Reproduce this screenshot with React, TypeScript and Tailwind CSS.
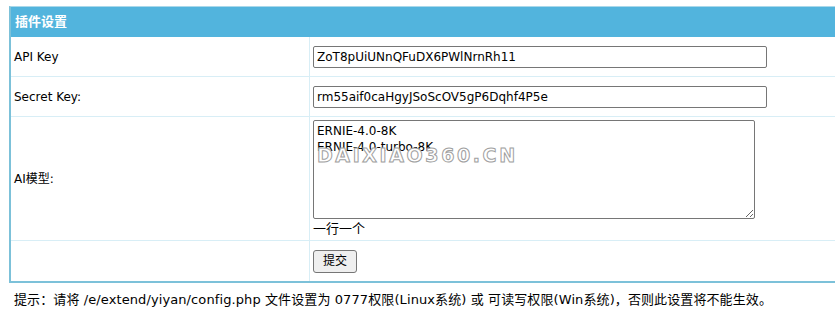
export default function App() {
  return (
    <div className="w-[835px] h-[311px] overflow-hidden bg-white font-['DejaVu_Sans','Noto_Sans_CJK_SC',sans-serif] text-[12px] text-black">
      {/* Settings table */}
      <div className="ml-[9px] mt-[6px] w-[840px] border-t border-t-[#a9d8ea] border-l-2 border-l-[#7cc1d9] border-b-2 border-b-[#7cc1d9]">
        {/* Header */}
        <div className="h-[30px] bg-[#52b4dd] flex items-center pl-[4px] text-white font-bold text-[13px]">
          插件设置
        </div>

        {/* API Key */}
        <div className="grid grid-cols-[299px_1fr] h-[40px] border-b border-[#d8eef6]">
          <div className="flex items-center pl-[3px] border-r border-[#d8eef6]">API Key</div>
          <div className="flex items-center pl-[3px]">
            <input
              type="text"
              defaultValue="ZoT8pUiUNnQFuDX6PWlNrnRh11"
              className="w-[454px] h-[22px] border border-[#767676] rounded-[2px] px-[3px] text-[12px] outline-none"
            />
          </div>
        </div>

        {/* Secret Key */}
        <div className="grid grid-cols-[299px_1fr] h-[40px] border-b border-[#d8eef6]">
          <div className="flex items-center pl-[3px] border-r border-[#d8eef6]">Secret Key:</div>
          <div className="flex items-center pl-[3px]">
            <input
              type="text"
              defaultValue="rm55aif0caHgyJSoScOV5gP6Dqhf4P5e"
              className="w-[454px] h-[22px] border border-[#767676] rounded-[2px] px-[3px] text-[12px] outline-none"
            />
          </div>
        </div>

        {/* AI model */}
        <div className="grid grid-cols-[299px_1fr] h-[124px] border-b border-[#d8eef6]">
          <div className="flex items-center pl-[3px] border-r border-[#d8eef6]">AI模型:</div>
          <div className="pl-[3px] pt-[3px]">
            <div className="relative w-[442px]">
              <textarea
                defaultValue={"ERNIE-4.0-8K\nERNIE-4.0-turbo-8K"}
                className="block w-[442px] h-[99px] border border-[#767676] rounded-[2px] px-[3px] py-[2px] text-[12px] leading-[16px] outline-none resize"
              />
              {/* watermark */}
              <div className="absolute left-[4px] top-[26px] text-[19px] font-bold tracking-[2.6px] text-white [-webkit-text-stroke:1px_#a0a0a0] font-['DejaVu_Sans',sans-serif] leading-none pointer-events-none">
                DAIXIAO360.CN
              </div>
            </div>
            <div className="mt-[2px] leading-[16px] text-[13px]">一行一个</div>
          </div>
        </div>

        {/* Submit */}
        <div className="grid grid-cols-[299px_1fr] h-[40px]">
          <div className="border-r border-[#d8eef6]"></div>
          <div className="flex items-center pl-[3px]">
            <button className="w-[44px] h-[23px] bg-[#efefef] border border-[#767676] rounded-[3px] text-[12px]">
              提交
            </button>
          </div>
        </div>
      </div>

      {/* Hint */}
      <div className="pl-[14px] pt-[7px] text-[13px] tracking-[0.1px]">
        提示：请将 /e/extend/yiyan/config.php 文件设置为 0777权限(Linux系统) 或 可读写权限(Win系统)，否则此设置将不能生效。
      </div>
    </div>
  );
}
